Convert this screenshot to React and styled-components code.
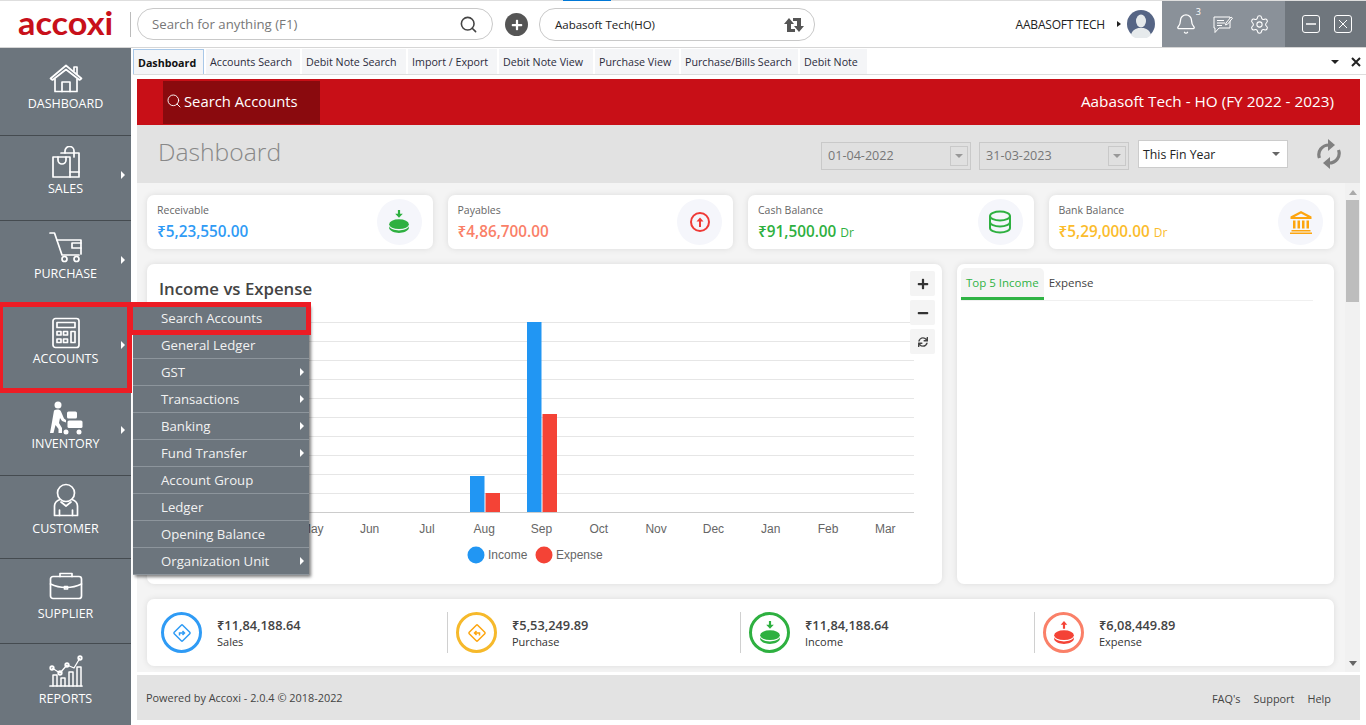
import styled, { createGlobalStyle } from "styled-components";
import { Search, Bell, Settings } from "lucide-react";
import { FaSync, FaPlus, FaMinus } from "react-icons/fa";

const font = `"Open Sans", "Noto Sans", sans-serif`;

const navItems = [
  { label: "DASHBOARD", icon: "home", pad: 14, h: 88 },
  { label: "SALES", icon: "bag", caret: true },
  { label: "PURCHASE", icon: "cart", caret: true },
  { label: "ACCOUNTS", icon: "calc", caret: true, marked: true },
  { label: "INVENTORY", icon: "stock", caret: true },
  { label: "CUSTOMER", icon: "person", h: 83, lift: 3 },
  { label: "SUPPLIER", icon: "case", pad: 13, lift: 2 },
  { label: "REPORTS", icon: "report", pad: 13, h: 81, lift: 2 },
];

const tabs = [
  ["Dashboard", 71],
  ["Accounts Search", 94],
  ["Debit Note Search", 104],
  ["Import / Export", 89],
  ["Debit Note View", 94],
  ["Purchase View", 84],
  ["Purchase/Bills Search", 117],
  ["Debit Note", 67],
];

const menuItems = [
  { label: "Search Accounts", marked: true },
  { label: "General Ledger" },
  { label: "GST", caret: true },
  { label: "Transactions", caret: true },
  { label: "Banking", caret: true },
  { label: "Fund Transfer", caret: true },
  { label: "Account Group" },
  { label: "Ledger" },
  { label: "Opening Balance" },
  { label: "Organization Unit", caret: true },
];

const stats = [
  { label: "Receivable", value: "₹5,23,550.00", color: "#2f9bf5", icon: "in" },
  { label: "Payables", value: "₹4,86,700.00", color: "#fa8068", icon: "up" },
  { label: "Cash Balance", value: "₹91,500.00", color: "#2eb040", dr: true, icon: "coins" },
  { label: "Bank Balance", value: "₹5,29,000.00", color: "#fbbc2c", dr: true, icon: "bank" },
];

const totals = [
  { label: "Sales", value: "₹11,84,188.64", ring: "#2f9bf5", icon: "right", w: 295 },
  { label: "Purchase", value: "₹5,53,249.89", ring: "#f6b92b", icon: "left", w: 293 },
  { label: "Income", value: "₹11,84,188.64", ring: "#2eb040", icon: "in", w: 294 },
  { label: "Expense", value: "₹6,08,449.89", ring: "#fa8068", icon: "out" },
];

const months = ["May", "Jun", "Jul", "Aug", "Sep", "Oct", "Nov", "Dec", "Jan", "Feb", "Mar"];

function NavIcon({ name }) {
  const p = { fill: "none", stroke: "#fff", strokeWidth: 1.7, strokeLinejoin: "round", strokeLinecap: "round" };
  if (name === "home")
    return (
      <svg width="34" height="32" viewBox="0 0 34 32" {...p}>
        <path d="M1.5 16.5 17 3.5l15.500 13-2 1.500L17 7.500 3.500 18z" />
        <path d="M25 9V5h3v7" />
        <path d="M6 17v12.500h22V17" />
        <path d="M13 29.500V20h8v9.500" />
      </svg>
    );
  if (name === "bag")
    return (
      <svg width="30" height="34" viewBox="0 0 30 34" {...p}>
        <path d="M2 11h17v20H2z" />
        <path d="M7 11v3a4 4 0 0 0 8 0v-3" />
        <path d="M10 7h18v24H19" />
        <path d="M14 7V5a4.500 4.500 0 0 1 9 0v6" />
        <path d="M19 26h9" />
      </svg>
    );
  if (name === "cart")
    return (
      <svg width="34" height="32" viewBox="0 0 34 32" {...p}>
        <path d="M1 1h4.500L13 23h17" />
        <path d="M8 8h24v14" />
        <path d="M32 11h-9v5h9" />
        <circle cx="15.500" cy="27" r="2.500" />
        <circle cx="27.500" cy="27" r="2.500" />
      </svg>
    );
  if (name === "calc")
    return (
      <svg width="28" height="32" viewBox="0 0 28 32" {...p}>
        <rect x="1" y="1.500" width="26" height="29" rx="2.500" />
        <rect x="5" y="5.500" width="18" height="5" />
        <rect x="5" y="14.500" width="4" height="3.500" />
        <rect x="11.500" y="14.500" width="4" height="3.500" />
        <rect x="5" y="22" width="4" height="3.500" />
        <rect x="11.500" y="22" width="4" height="3.500" />
        <rect x="19" y="14.500" width="4" height="11" />
      </svg>
    );
  if (name === "stock")
    return (
      <svg width="34" height="34" viewBox="0 0 34 34" fill="#fff">
        <circle cx="9" cy="4" r="3.500" />
        <path d="M5 9.500c2-1.500 6-1.500 7 1l3 7 2 1.500v2.500l-4-1.500-2-3-1 5 3 5v5H9.500v-4l-3-4-2 8H1l2-11z" />
        <rect x="18" y="10.500" width="10" height="7" rx="1.500" />
        <rect x="18.500" y="19.500" width="15" height="7.500" rx="1.500" />
        <circle cx="17" cy="31" r="2.500" />
        <circle cx="30" cy="31" r="2.500" />
      </svg>
    );
  if (name === "person")
    return (
      <svg width="28" height="34" viewBox="0 0 28 34" {...p}>
        <circle cx="14" cy="10" r="8.500" />
        <path d="M8 16.500C4 18 2.500 20 2.500 23v9.500h23V23c0-3-1.500-5-5.500-6.500" />
        <path d="M9 19l5 4 5-4" />
        <path d="M7.500 27v5.500M20.500 27v5.500" />
      </svg>
    );
  if (name === "case")
    return (
      <svg width="34" height="30" viewBox="0 0 34 30" {...p}>
        <rect x="1.500" y="5.500" width="31" height="22" rx="2.500" />
        <path d="M11 5.500V2.500h12v3" />
        <path d="M1.500 13c5 2.500 10 3.500 15.500 3.500S27.500 15.500 32.500 13" />
        <path d="M15.500 15.500h3v2.500h-3z" />
      </svg>
    );
  return (
    <svg width="34" height="34" viewBox="0 0 34 34" {...p}>
      <path d="M1 32h32" />
      <path d="M4 32V21h4v11M12 32V24h4v8M20 32V18h4v14M28 32V13h4v19" strokeWidth="1.500" />
      <path d="M3 14l8 5 7-8 7 3 6-10" strokeWidth="1.300" />
      <circle cx="3" cy="14" r="1.800" />
      <circle cx="11" cy="19" r="1.800" />
      <circle cx="18" cy="11" r="1.800" />
      <circle cx="31" cy="4" r="1.800" />
    </svg>
  );
}

function CoinIcon({ color, up, size = 22 }) {
  return (
    <svg width={size} height={size} viewBox="0 0 22 22" fill={color}>
      {up ? (
        <path d="M11 0l3 3.500h-2V7h-2V3.500H8z" />
      ) : (
        <path d="M10 0h2v3.500h2.500L11 7 7.500 3.500H10z" />
      )}
      <ellipse cx="11" cy="13" rx="9" ry="4.500" />
      <path d="M2 15c1 2.500 5 3.700 9 3.700s8-1.200 9-3.700v2c-1 2.500-5 4-9 4s-8-1.500-9-4z" />
    </svg>
  );
}

function StatIcon({ name, color }) {
  if (name === "in") return <CoinIcon color="#2eb040" size={24} />;
  if (name === "up")
    return (
      <svg width="22" height="22" viewBox="0 0 22 22" fill="none" stroke="#ef3a36" strokeWidth="2">
        <circle cx="11" cy="11" r="9" />
        <path d="M11 16V8" />
        <path d="M7.500 10.500 11 6.500l3.500 4z" fill="#ef3a36" stroke="none" />
      </svg>
    );
  if (name === "coins")
    return (
      <svg width="24" height="24" viewBox="0 0 24 24" fill="none" stroke={color} strokeWidth="2">
        <ellipse cx="12" cy="6" rx="10" ry="4.500" />
        <path d="M2 6v12c0 2.500 4.500 4.500 10 4.500s10-2 10-4.500V6" />
        <path d="M2 12c0 2.500 4.500 4.500 10 4.500s10-2 10-4.500" />
      </svg>
    );
  return (
    <svg width="24" height="24" viewBox="0 0 24 24" fill="#fda50f">
      <path d="M12 1 1.500 6.500V9h21V6.500zM12 3.500l6.500 3.500h-13z" fillRule="evenodd" />
      <path d="M4 10.500h2.500v8H4zM8.500 10.500H11v8H8.500zM13 10.500h2.500v8H13zM17.500 10.500H20v8h-2.500zM2.500 20h19v1.500h-19zM1 22.500h22V24H1z" />
    </svg>
  );
}

function TotalIcon({ name }) {
  if (name === "in") return <CoinIcon color="#2eb040" size={24} />;
  if (name === "out") return <CoinIcon color="#f44336" up size={24} />;
  const c = name === "right" ? "#2f9bf5" : "#fda50f";
  const arrow = name === "right" ? "M7.500 12.500V10H12M10.500 8l2 2-2 2" : "M12.500 12.500V10H8M9.500 8l-2 2 2 2";
  return (
    <svg width="20" height="20" viewBox="0 0 20 20" fill="none" stroke={c} strokeWidth="1.500">
      <rect x="4" y="4" width="12" height="12" rx="1" transform="rotate(45 10 10)" />
      <path d={arrow} />
    </svg>
  );
}

export default function App() {
  return (
    <Page>
      <GlobalStyle />
      <TopBar>
        <LoadStrip />
        <LogoBox>
          <Logo>accoxi</Logo>
        </LogoBox>
        <SearchPill>
          <Placeholder>Search for anything (F1)</Placeholder>
          <Search size={19} color="#444" strokeWidth={2} />
        </SearchPill>
        <PlusButton>
          <FaPlus size={12} color="#fff" />
        </PlusButton>
        <CompanyPill>
          <CompanyName>Aabasoft Tech(HO)</CompanyName>
          <svg width="20" height="16" viewBox="0 0 20 16" fill="#555">
            <path d="M0 7l5-6 5 6H7v5h4v3H3V7z" />
            <path d="M20 9l-5 6-5-6h3V4H9V1h8v8z" />
          </svg>
        </CompanyPill>
        <UserBlock>
          <UserName>AABASOFT TECH</UserName>
          <TinyCaret />
          <Avatar>
            <svg width="28" height="28" viewBox="0 0 28 28">
              <circle cx="14" cy="14" r="14" fill="#566585" />
              <ellipse cx="14" cy="11" rx="5" ry="6.500" fill="#e6eaec" />
              <path d="M4 25c1-5 5-6 7-7h6c2 1 6 2 7 7a14 14 0 0 1-20 0z" fill="#e6eaec" />
            </svg>
          </Avatar>
        </UserBlock>
        <NoticePanel>
          <BellBox>
            <Bell size={22} color="#fff" strokeWidth={1.4} />
            <BellCount>3</BellCount>
          </BellBox>
          <svg width="20" height="20" viewBox="0 0 20 20" fill="none" stroke="#fff" strokeWidth="1">
            <path d="M1 3h16v11H6l-4 4.500V14H1z" />
            <path d="M4 6.500h7M4 9h8M4 11.500h5" />
            <path d="M13 9l5-6 1.500 1.200-5 6-2 .8z" fill="#8a9199" />
          </svg>
          <Settings size={21} color="#fff" strokeWidth={1.2} />
        </NoticePanel>
        <WindowPanel>
          <WindowButton>
            <svg width="14" height="14" viewBox="0 0 14 14">
              <path d="M2 7h10" stroke="#fff" strokeWidth="1.500" />
            </svg>
          </WindowButton>
          <WindowButton>
            <svg width="14" height="14" viewBox="0 0 14 14">
              <path d="M3 3l8 8M11 3l-8 8" stroke="#fff" strokeWidth="1" />
            </svg>
          </WindowButton>
        </WindowPanel>
      </TopBar>

      <Body>
        <Sidebar>
          {navItems.map((item) => (
            <NavItem key={item.label} $pad={item.pad} $h={item.h} $marked={item.marked}>
              <NavIconBox $lift={item.lift}>
                <NavIcon name={item.icon} />
              </NavIconBox>
              <NavLabel>{item.label}</NavLabel>
              {item.caret && <NavCaret />}
            </NavItem>
          ))}
        </Sidebar>

        <Main>
          <TabStrip>
            {tabs.map(([name, w], i) => (
              <Tab key={name} $active={i === 0} $w={w}>
                {name}
              </Tab>
            ))}
            <TabTools>
              <DownCaret />
              <svg width="10" height="10" viewBox="0 0 10 10">
                <path d="M1 1l8 8M9 1l-8 8" stroke="#222" strokeWidth="2" />
              </svg>
            </TabTools>
          </TabStrip>

          <View>
            <RedBar>
              <RedSearch>
                <Search size={16} color="#fff" strokeWidth={1.4} />
                Search Accounts
              </RedSearch>
              <OrgTitle>Aabasoft Tech - HO (FY 2022 - 2023)</OrgTitle>
            </RedBar>

            <HeadBar>
              <PageTitle>Dashboard</PageTitle>
              <DateBox>
                01-04-2022
                <DateButton>
                  <DownCaret $color="#999" />
                </DateButton>
              </DateBox>
              <DateBox>
                31-03-2023
                <DateButton>
                  <DownCaret $color="#999" />
                </DateButton>
              </DateBox>
              <PeriodSelect>
                This Fin Year
                <DownCaret $color="#666" />
              </PeriodSelect>
              <RefreshBox>
                <svg width="26" height="30" viewBox="0 0 26 30" fill="#808080">
                  <path d="M3.500 19C1 12.500 6 6 13 6" fill="none" stroke="#808080" strokeWidth="3.200" />
                  <path d="M12 0l7 6-7 6z" />
                  <path d="M22.500 11C25 17.500 20 24 13 24" fill="none" stroke="#808080" strokeWidth="3.200" />
                  <path d="M14 18l-7 6 7 6z" />
                </svg>
              </RefreshBox>
            </HeadBar>

            <Content>
              <Scroller>
                <StatRow>
                  {stats.map((s) => (
                    <StatCard key={s.label}>
                      <StatText>
                        <StatLabel>{s.label}</StatLabel>
                        <StatValue $color={s.color}>
                          {s.value}
                          {s.dr && <DrTag>Dr</DrTag>}
                        </StatValue>
                      </StatText>
                      <StatCircle>
                        <StatIcon name={s.icon} color={s.color} />
                      </StatCircle>
                    </StatCard>
                  ))}
                </StatRow>

                <ChartRow>
                  <ChartCard>
                    <ChartTitle>Income vs Expense</ChartTitle>
                    <ZoomTools>
                      <ZoomButton>
                        <FaPlus size={12} color="#333" />
                      </ZoomButton>
                      <ZoomButton>
                        <FaMinus size={12} color="#333" />
                      </ZoomButton>
                      <ZoomButton>
                        <FaSync size={10} color="#444" />
                      </ZoomButton>
                    </ZoomTools>
                    <ChartSvg width="795" height="271" viewBox="0 0 795 271">
                      {Array.from({ length: 10 }, (_, i) => (
                        <line key={i} x1="50" x2="767" y1={9.5 + i * 19} y2={9.5 + i * 19} stroke="#e6e6e6" />
                      ))}
                      <line x1="50" x2="767" y1="199.500" y2="199.500" stroke="#ccc" />
                      <rect x="323" y="163" width="14.500" height="36" fill="#2196f3" />
                      <rect x="338.500" y="180" width="14.500" height="19" fill="#f44336" />
                      <rect x="380" y="9" width="14.500" height="190" fill="#2196f3" />
                      <rect x="395.500" y="101" width="14.500" height="98" fill="#f44336" />
                      {months.map((m, i) => (
                        <AxisText key={m} x={165.3 + i * 57.3} y="220" textAnchor="middle">
                          {m}
                        </AxisText>
                      ))}
                      <circle cx="329" cy="242" r="8.500" fill="#2196f3" />
                      <AxisText x="341" y="246">Income</AxisText>
                      <circle cx="397" cy="242" r="8.500" fill="#f44336" />
                      <AxisText x="409" y="246">Expense</AxisText>
                    </ChartSvg>
                  </ChartCard>

                  <TopCard>
                    <TopTabs>
                      <TopTab $active>Top 5 Income</TopTab>
                      <TopTab>Expense</TopTab>
                    </TopTabs>
                  </TopCard>
                </ChartRow>

                <TotalsCard>
                  {totals.map((t, i) => (
                    <TotalItem key={t.label} $w={t.w} $divided={i < totals.length - 1}>
                      <TotalRing $color={t.ring}>
                        <TotalIcon name={t.icon} />
                      </TotalRing>
                      <TotalText>
                        <TotalValue>{t.value}</TotalValue>
                        <TotalLabel>{t.label}</TotalLabel>
                      </TotalText>
                    </TotalItem>
                  ))}
                </TotalsCard>
              </Scroller>

              <ScrollBar>
                <ScrollArrow />
                <ScrollThumb />
                <ScrollArrow $down />
              </ScrollBar>
            </Content>

            <Footer>
              <FooterText>Powered by Accoxi - 2.0.4 © 2018-2022</FooterText>
              <FooterLinks>
                <span>FAQ's</span>
                <span>Support</span>
                <span>Help</span>
              </FooterLinks>
            </Footer>
          </View>
        </Main>
      </Body>

      <FlyMenu>
        {menuItems.map((m) => (
          <MenuRow key={m.label} $marked={m.marked}>
            {m.label}
            {m.caret && <MenuCaret />}
          </MenuRow>
        ))}
      </FlyMenu>
    </Page>
  );
}

const GlobalStyle = createGlobalStyle`
  html, body {
    margin: 0;
    padding: 0;
    background: #fff;
    font-family: ${font};
  }
  * {
    box-sizing: border-box;
  }
`;

const Page = styled.div`
  position: relative;
  width: 1366px;
  height: 725px;
  overflow: hidden;
  display: flex;
  flex-direction: column;
  background: #fff;
`;

const TopBar = styled.header`
  position: relative;
  height: 48px;
  flex: none;
  display: flex;
  align-items: stretch;
  background: #fff;
  border-top: 1px solid #dedede;
  border-bottom: 1px solid #d6d6d6;
`;

const LoadStrip = styled.div`
  position: absolute;
  left: 563px;
  top: -1px;
  width: 48px;
  height: 1px;
  background: #0078d7;
`;

const LogoBox = styled.div`
  width: 131px;
  flex: none;
  display: flex;
  align-items: center;
  padding-left: 18px;
  position: relative;

  &:after {
    content: "";
    position: absolute;
    right: 0;
    top: 11px;
    height: 25px;
    width: 1px;
    background: #bbb;
  }
`;

const Logo = styled.span`
  font-family: Lato, sans-serif;
  font-size: 32px;
  font-weight: 700;
  color: #c8101a;
  line-height: 1;
  margin-top: -3px;
  transform: scaleX(1.07);
  transform-origin: left center;
`;

const SearchPill = styled.div`
  width: 356px;
  height: 32px;
  margin: 7px 0 0 6px;
  padding: 0 14px;
  display: flex;
  align-items: center;
  justify-content: space-between;
  border: 1px solid #c9c9c9;
  border-radius: 16px;
`;

const Placeholder = styled.span`
  font-size: 13.200px;
  color: #777;
  margin-top: -1px;
`;

const PlusButton = styled.div`
  width: 23px;
  height: 23px;
  margin: 12px 0 0 12px;
  border-radius: 50%;
  background: #555;
  display: flex;
  align-items: center;
  justify-content: center;
`;

const CompanyPill = styled.div`
  width: 276px;
  height: 33px;
  margin: 7px 0 0 11px;
  padding: 0 10px 0 15px;
  display: flex;
  align-items: center;
  justify-content: space-between;
  border: 1px solid #c9c9c9;
  border-radius: 16px;
`;

const CompanyName = styled.span`
  font-size: 11.500px;
  color: #222;
`;

const UserBlock = styled.div`
  margin-left: auto;
  display: flex;
  align-items: center;
  padding-right: 7px;
`;

const UserName = styled.span`
  font-size: 12px;
  color: #222;
  letter-spacing: -0.2px;
`;

const TinyCaret = styled.i`
  width: 0;
  height: 0;
  margin: 0 6px 0 12px;
  border-left: 4px solid #222;
  border-top: 3.5px solid transparent;
  border-bottom: 3.5px solid transparent;
`;

const Avatar = styled.div`
  width: 28px;
  height: 28px;
  display: flex;
`;

const NoticePanel = styled.div`
  width: 123px;
  flex: none;
  padding: 0 15px 0 13px;
  display: flex;
  align-items: center;
  justify-content: space-between;
  background: #8a9199;
`;

const BellBox = styled.div`
  position: relative;
  display: flex;
`;

const BellCount = styled.span`
  position: absolute;
  right: -4px;
  top: -8px;
  font-size: 9px;
  color: #fff;
`;

const WindowPanel = styled.div`
  width: 81px;
  flex: none;
  display: flex;
  align-items: center;
  gap: 14px;
  padding-left: 17px;
  background: #6f767d;
`;

const WindowButton = styled.div`
  width: 18px;
  height: 18px;
  border: 1px solid #fff;
  border-radius: 3px;
  display: flex;
  align-items: center;
  justify-content: center;
`;

const Body = styled.div`
  flex: 1;
  min-height: 0;
  display: flex;
`;

const Sidebar = styled.nav`
  width: 131px;
  flex: none;
  display: flex;
  flex-direction: column;
  background: #6c757d;
`;

const NavItem = styled.div`
  position: relative;
  height: ${(p) => p.$h || 85}px;
  flex: none;
  padding-top: ${(p) => p.$pad || 11}px;
  display: flex;
  flex-direction: column;
  align-items: center;
  border-bottom: 1px solid #454b50;

  &:last-child {
    border-bottom: 0;
  }

  ${(p) =>
    p.$marked &&
    `
    &:after {
      content: "";
      position: absolute;
      z-index: 3;
      left: 0;
      right: -1px;
      top: -4px;
      bottom: -3px;
      border: 5px solid #ed1c24;
      border-left-width: 3px;
    }
  `}
`;

const NavIconBox = styled.div`
  height: 32px;
  margin-top: ${(p) => -(p.$lift || 0)}px;
  margin-bottom: ${(p) => p.$lift || 0}px;
  display: flex;
  align-items: center;
  justify-content: center;
`;

const NavLabel = styled.span`
  margin-top: 1px;
  font-size: 12.500px;
  line-height: 18px;
  color: #fff;
`;

const NavCaret = styled.i`
  position: absolute;
  right: 6px;
  top: 35px;
  width: 0;
  height: 0;
  border-left: 4px solid #fff;
  border-top: 4px solid transparent;
  border-bottom: 4px solid transparent;
`;

const Main = styled.div`
  flex: 1;
  min-width: 0;
  padding-left: 2px;
  display: flex;
  flex-direction: column;
`;

const TabStrip = styled.div`
  height: 27px;
  flex: none;
  padding-top: 1px;
  display: flex;
  gap: 2px;
  border-bottom: 1px solid #ddd;
`;

const Tab = styled.div`
  width: ${(p) => p.$w}px;
  padding-left: 4px;
  font-size: 10.700px;
  line-height: 26px;
  white-space: nowrap;
  color: ${(p) => (p.$active ? "#111" : "#2c2c3c")};
  font-weight: ${(p) => (p.$active ? 700 : 400)};
  background: #f4f5f7;
  border: ${(p) => (p.$active ? "1px solid #a9c8e8" : "0")};
  border-bottom: 0;
`;

const TabTools = styled.div`
  margin-left: auto;
  padding-right: 5px;
  display: flex;
  align-items: center;
  gap: 12px;
`;

const DownCaret = styled.i`
  width: 0;
  height: 0;
  flex: none;
  border-top: 4px solid ${(p) => p.$color || "#222"};
  border-left: 4px solid transparent;
  border-right: 4px solid transparent;
`;

const View = styled.div`
  flex: 1;
  min-height: 0;
  margin: 4px 6px 5px 4px;
  display: flex;
  flex-direction: column;
`;

const RedBar = styled.div`
  height: 46px;
  flex: none;
  padding: 2px 26px 1px 26px;
  display: flex;
  align-items: stretch;
  justify-content: space-between;
  background: #c80f17;
  color: #fff;
`;

const RedSearch = styled.div`
  width: 157px;
  padding: 0 0 3px 3px;
  display: flex;
  align-items: center;
  gap: 2px;
  font-size: 14.800px;
  background: #8a0a0e;
`;

const OrgTitle = styled.div`
  display: flex;
  align-items: center;
  padding-bottom: 3px;
  font-size: 15.300px;
`;

const HeadBar = styled.div`
  height: 58px;
  flex: none;
  padding: 0 18px 0 21px;
  display: flex;
  align-items: center;
  background: #e2e2e2;
`;

const PageTitle = styled.h1`
  margin: 0 auto 6px 0;
  font-size: 24.700px;
  font-weight: 300;
  color: #888;
`;

const DateBox = styled.div`
  width: 150px;
  height: 28px;
  margin: 3px 8px 0 0;
  padding: 0 2px 0 6px;
  display: flex;
  align-items: center;
  justify-content: space-between;
  font-size: 12.600px;
  color: #777;
  background: #e0e0e0;
  border: 1px solid #c9c9c9;
`;

const DateButton = styled.div`
  width: 18px;
  height: 20px;
  display: flex;
  align-items: center;
  justify-content: center;
  border: 1px solid #c9c9c9;
`;

const PeriodSelect = styled.div`
  width: 150px;
  height: 28px;
  margin-left: 1px;
  padding: 0 7px 0 4px;
  display: flex;
  align-items: center;
  justify-content: space-between;
  font-size: 12.300px;
  color: #222;
  background: #fff;
  border: 1px solid #ccc;
`;

const RefreshBox = styled.div`
  width: 26px;
  margin: 0 0 1px 28px;
  display: flex;
`;

const Content = styled.div`
  flex: 1;
  min-height: 0;
  display: flex;
  background: #f4f4f4;
`;

const Scroller = styled.div`
  flex: 1;
  min-width: 0;
  padding: 12px 11px 6px 10px;
  display: flex;
  flex-direction: column;
  gap: 15px;
`;

const card = `
  background: #fff;
  border-radius: 7px;
  box-shadow: 0 0 6px rgba(0, 0, 0, 0.1);
`;

const StatRow = styled.div`
  display: grid;
  grid-template-columns: repeat(4, 1fr);
  gap: 15px;
`;

const StatCard = styled.div`
  ${card}
  height: 54px;
  padding: 0 11px 0 10px;
  display: flex;
  align-items: center;
  justify-content: space-between;
`;

const StatText = styled.div`
  display: flex;
  flex-direction: column;
  gap: 2px;
`;

const StatLabel = styled.span`
  font-size: 10.500px;
  line-height: 15px;
  color: #666;
`;

const StatValue = styled.span`
  font-size: 15.300px;
  line-height: 22px;
  font-weight: 600;
  color: ${(p) => p.$color};
`;

const DrTag = styled.small`
  margin-left: 4px;
  font-size: 12px;
  line-height: 1;
  font-weight: 400;
`;

const StatCircle = styled.div`
  width: 45px;
  height: 46px;
  border-radius: 50%;
  display: flex;
  align-items: center;
  justify-content: center;
  background: #f5f6fb;
`;

const ChartRow = styled.div`
  height: 320px;
  display: flex;
  gap: 15px;
`;

const ChartCard = styled.section`
  ${card}
  position: relative;
  width: 795px;
  flex: none;
`;

const ChartTitle = styled.h2`
  height: 49px;
  margin: 0;
  padding: 13px 0 0 12px;
  font-size: 16.800px;
  line-height: 24px;
  font-weight: 600;
  color: #444;
`;

const ZoomTools = styled.div`
  position: absolute;
  top: 7px;
  right: 7px;
  display: flex;
  flex-direction: column;
  gap: 4px;
`;

const ZoomButton = styled.div`
  width: 25px;
  height: 25px;
  border-radius: 2px;
  display: flex;
  align-items: center;
  justify-content: center;
  background: #f4f4f4;
`;

const ChartSvg = styled.svg`
  display: block;
`;

const AxisText = styled.text`
  font-family: "Liberation Sans", Arial, sans-serif;
  font-size: 12px;
  fill: #666;
`;

const TopCard = styled.section`
  ${card}
  flex: 1;
  padding: 4px 21px 0 4px;
`;

const TopTabs = styled.div`
  height: 33px;
  display: flex;
  border-bottom: 1px solid #f0f0f0;
`;

const TopTab = styled.div`
  padding: 0 5px;
  font-size: 11.500px;
  line-height: 29px;
  font-weight: 500;
  color: ${(p) => (p.$active ? "#2fb344" : "#444")};
  background: ${(p) => (p.$active ? "#f4f4f4" : "transparent")};
  border-bottom: ${(p) => (p.$active ? "3px solid #2fb344" : "0")};
  border-radius: 5px 5px 0 0;
`;

const TotalsCard = styled.section`
  ${card}
  height: 67px;
  padding: 0 0 0 14px;
  display: flex;
  align-items: center;
`;

const TotalItem = styled.div`
  position: relative;
  width: ${(p) => (p.$w ? `${p.$w}px` : "auto")};
  flex: none;
  display: flex;
  align-items: center;
  gap: 15px;

  ${(p) =>
    p.$divided &&
    `
    &:after {
      content: "";
      position: absolute;
      right: 8px;
      top: 0;
      bottom: 0;
      width: 1px;
      background: #d0d0d0;
    }
  `}
`;

const TotalRing = styled.div`
  width: 41px;
  height: 41px;
  border-radius: 50%;
  display: flex;
  align-items: center;
  justify-content: center;
  border: 3px solid ${(p) => p.$color};
`;

const TotalText = styled.div`
  display: flex;
  flex-direction: column;
`;

const TotalValue = styled.span`
  font-size: 12.800px;
  line-height: 18px;
  font-weight: 600;
  color: #444;
`;

const TotalLabel = styled.span`
  font-size: 11px;
  line-height: 15px;
  color: #333;
`;

const ScrollBar = styled.div`
  width: 15px;
  flex: none;
  padding: 3px 1px 0 1px;
  display: flex;
  flex-direction: column;
  background: #f1f1f1;
`;

const ScrollArrow = styled.i`
  width: 0;
  height: 0;
  flex: none;
  margin: 4px auto 5px;
  ${(p) => (p.$down ? "margin-top: auto; margin-bottom: 6px;" : "")}
  border-left: 4px solid transparent;
  border-right: 4px solid transparent;
  ${(p) => (p.$down ? "border-top: 5px solid #666;" : "border-bottom: 5px solid #aaa;")}
`;

const ScrollThumb = styled.div`
  height: 102px;
  flex: none;
  background: #bdbdbd;
`;

const Footer = styled.footer`
  height: 45px;
  flex: none;
  margin-top: 3px;
  padding: 0 29px 0 9px;
  display: flex;
  align-items: center;
  justify-content: space-between;
  background: #e3e3e3;
  font-size: 10.900px;
  color: #444;
`;

const FooterText = styled.span``;

const FooterLinks = styled.div`
  display: flex;
  gap: 13px;
  margin-top: 2px;
`;

const FlyMenu = styled.div`
  position: absolute;
  z-index: 5;
  left: 133px;
  top: 305px;
  width: 176px;
  background: #6c757d;
  box-shadow: 2px 2px 3px rgba(0, 0, 0, 0.5);
`;

const MenuRow = styled.div`
  position: relative;
  height: 27px;
  padding-left: 28px;
  font-size: 13.200px;
  line-height: 26px;
  color: #f2f2f2;
  border-bottom: 1px solid #8d959c;

  ${(p) =>
    p.$marked &&
    `
    &:after {
      content: "";
      position: absolute;
      left: -2px;
      right: -2px;
      top: -3px;
      bottom: -4px;
      border: 5px solid #ed1c24;
      border-left-width: 2px;
    }
  `}
`;

const MenuCaret = styled.i`
  position: absolute;
  right: 5px;
  top: 9px;
  width: 0;
  height: 0;
  border-left: 4px solid #fff;
  border-top: 4px solid transparent;
  border-bottom: 4px solid transparent;
`;
